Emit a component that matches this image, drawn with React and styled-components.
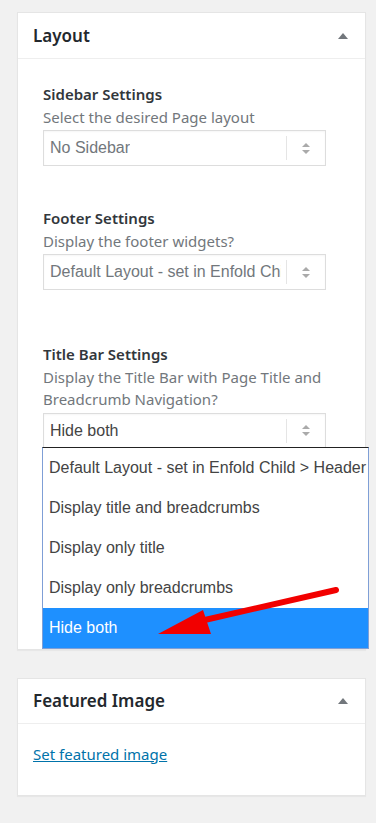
import styled, { createGlobalStyle } from "styled-components"

const GlobalStyle = createGlobalStyle`
body {
  margin: 0;
  background: #f1f1f1;
  font-family: "Noto Sans", "Open Sans", sans-serif;
}
`

const Page = styled.div`
position: relative;
width: 376px;
min-height: 823px;
padding-top: 12px;
box-sizing: border-box;
`

const Panel = styled.div`
margin: 0 10px 28px 17px;
background: #fff;
border: 1px solid #e5e5e5;
box-shadow: 0 1px 1px rgba(0, 0, 0, 0.04);
`

const PanelHeader = styled.div`
display: flex;
align-items: center;
justify-content: space-between;
height: ${(p) => p.h}px;
padding: 0 17px 0 15px;
border-bottom: 1px solid #eee;
`

const PanelTitle = styled.h2`
margin: 0;
font-size: 17px;
font-weight: 600;
color: #23282d;
`

const Toggle = styled.span`
width: 0;
height: 0;
border-left: 5px solid transparent;
border-right: 5px solid transparent;
border-bottom: 6px solid #72777c;
`

const PanelBody = styled.div`
position: relative;
padding: ${(p) => p.pad};
`

const Field = styled.div`
margin-bottom: ${(p) => p.gap}px;
`

const Label = styled.div`
font-size: 15px;
font-weight: 600;
line-height: 22.5px;
color: #32373c;
`

const Desc = styled.div`
font-size: 15px;
line-height: 22.5px;
color: #72777c;
`

const Select = styled.div`
position: relative;
display: flex;
align-items: center;
width: 283px;
height: 36px;
margin-top: 2px;
box-sizing: border-box;
border: 1px solid #ddd;
box-shadow: inset 0 1px 2px rgba(0, 0, 0, 0.04);
padding: 0 44px 0 6px;
font-family: "Liberation Sans", Arial, sans-serif;
font-size: 16px;
color: ${(p) => (p.active ? "#444" : "#72777c")};
white-space: nowrap;
overflow: hidden;
`

const SelectText = styled.span`
overflow: hidden;
`

const Arrows = styled.span`
position: absolute;
right: 0;
top: 5px;
bottom: 5px;
width: 38px;
border-left: 1px solid #e5e5e5;
display: flex;
flex-direction: column;
align-items: center;
justify-content: center;
gap: 3px;
`

const Tri = styled.span`
width: 0;
height: 0;
border-left: 4px solid transparent;
border-right: 4px solid transparent;
${(p) => (p.up ? "border-bottom: 4px solid #aaa;" : "border-top: 4px solid #aaa;")}
`

const Dropdown = styled.ul`
position: absolute;
left: 42px;
top: 447px;
width: 327px;
margin: 0;
padding: 0;
list-style: none;
box-sizing: border-box;
background: #fff;
border: 1px solid #7f9fd6;
border-top: 1px solid #222;
overflow: hidden;
font-family: "Liberation Sans", Arial, sans-serif;
font-size: 16px;
z-index: 2;
`

const Option = styled.li`
height: 40px;
display: flex;
align-items: center;
padding-left: 6px;
white-space: nowrap;
color: ${(p) => (p.selected ? "#fff" : "#444")};
background: ${(p) => (p.selected ? "#1e90ff" : "#fff")};
`

const Link = styled.a`
font-size: 15px;
line-height: 22px;
color: #0073aa;
text-decoration: underline;
`

const Annotation = styled.svg`
position: absolute;
left: 0;
top: 0;
pointer-events: none;
z-index: 3;
`

const options = [
  "Default Layout - set in Enfold Child > Header",
  "Display title and breadcrumbs",
  "Display only title",
  "Display only breadcrumbs",
  "Hide both",
]

const SelectBox = ({ value, active }) => (
  <Select active={active}>
    <SelectText>{value}</SelectText>
    <Arrows>
      <Tri up />
      <Tri />
    </Arrows>
  </Select>
)

const App = () => {
  return (
    <Page>
      <GlobalStyle />
      <Panel>
        <PanelHeader h={45}>
          <PanelTitle>Layout</PanelTitle>
          <Toggle />
        </PanelHeader>
        <PanelBody pad="24px 25px 200px 25px">
          <Field gap={41}>
            <Label>Sidebar Settings</Label>
            <Desc>Select the desired Page layout</Desc>
            <SelectBox value="No Sidebar" />
          </Field>
          <Field gap={53}>
            <Label>Footer Settings</Label>
            <Desc>Display the footer widgets?</Desc>
            <SelectBox value="Default Layout - set in Enfold Child > Footer" />
          </Field>
          <Field gap={0}>
            <Label>Title Bar Settings</Label>
            <Desc>Display the Title Bar with Page Title and Breadcrumb Navigation?</Desc>
            <SelectBox value="Hide both" active />
          </Field>
        </PanelBody>
      </Panel>
      <Panel>
        <PanelHeader h={44}>
          <PanelTitle>Featured Image</PanelTitle>
          <Toggle />
        </PanelHeader>
        <PanelBody pad="19px 15px 30px 15px">
          <Link href="#">Set featured image</Link>
        </PanelBody>
      </Panel>
      <Dropdown>
        {options.map((o) => (
          <Option key={o} selected={o === "Hide both"}>{o}</Option>
        ))}
      </Dropdown>
      <Annotation width="376" height="823">
        <line x1="336" y1="590" x2="196" y2="622" stroke="#f20000" strokeWidth="6" strokeLinecap="round" />
        <polygon points="158,634 203,610 211,634" fill="#f20000" />
      </Annotation>
    </Page>
  )
}

export default App
